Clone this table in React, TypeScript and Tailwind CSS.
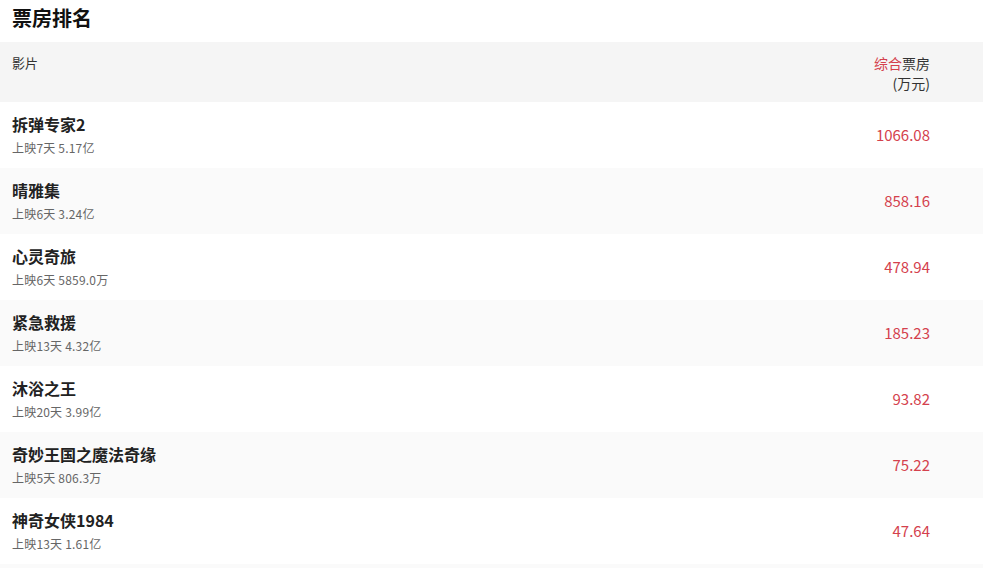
import React from "react";

const rows = [
  { name: "拆弹专家2", sub: "上映7天 5.17亿", val: "1066.08" },
  { name: "晴雅集", sub: "上映6天 3.24亿", val: "858.16" },
  { name: "心灵奇旅", sub: "上映6天 5859.0万", val: "478.94" },
  { name: "紧急救援", sub: "上映13天 4.32亿", val: "185.23" },
  { name: "沐浴之王", sub: "上映20天 3.99亿", val: "93.82" },
  { name: "奇妙王国之魔法奇缘", sub: "上映5天 806.3万", val: "75.22" },
  { name: "神奇女侠1984", sub: "上映13天 1.61亿", val: "47.64" },
];

export default function App() {
  return (
    <div
      className="w-full bg-white text-[#222]"
      style={{ fontFamily: '"Noto Sans CJK SC", "Noto Sans", sans-serif' }}
    >
      <div className="h-[42px] pl-3 pt-[3px] text-[20px] font-bold leading-[30px] text-[#111]">
        票房排名
      </div>
      <div className="flex h-[60px] justify-between bg-[#f5f5f5] pl-3 pr-[53px] pt-[11px]">
        <div className="text-[13px] leading-[20px] text-[#333]">影片</div>
        <div className="text-right text-[14px] leading-[20px] text-[#333]">
          <div>
            <span className="text-[#d4414d]">综合</span>票房
          </div>
          <div>(万元)</div>
        </div>
      </div>
      {rows.map((r, i) => (
        <div
          key={i}
          className={
            "flex h-[66px] items-center justify-between pl-3 pr-[53px] " +
            (i % 2 === 1 ? "bg-[#fafafa]" : "bg-white")
          }
        >
          <div>
            <div className="text-[16px] font-bold leading-[22px] text-[#222]">{r.name}</div>
            <div className="mt-1 text-[12px] leading-[18px] tracking-[0.2px] text-[#666]">{r.sub}</div>
          </div>
          <div className="text-[15px] leading-[20px] text-[#d4414d]">{r.val}</div>
        </div>
      ))}
      <div className="h-[66px] bg-[#fafafa]" />
    </div>
  );
}
